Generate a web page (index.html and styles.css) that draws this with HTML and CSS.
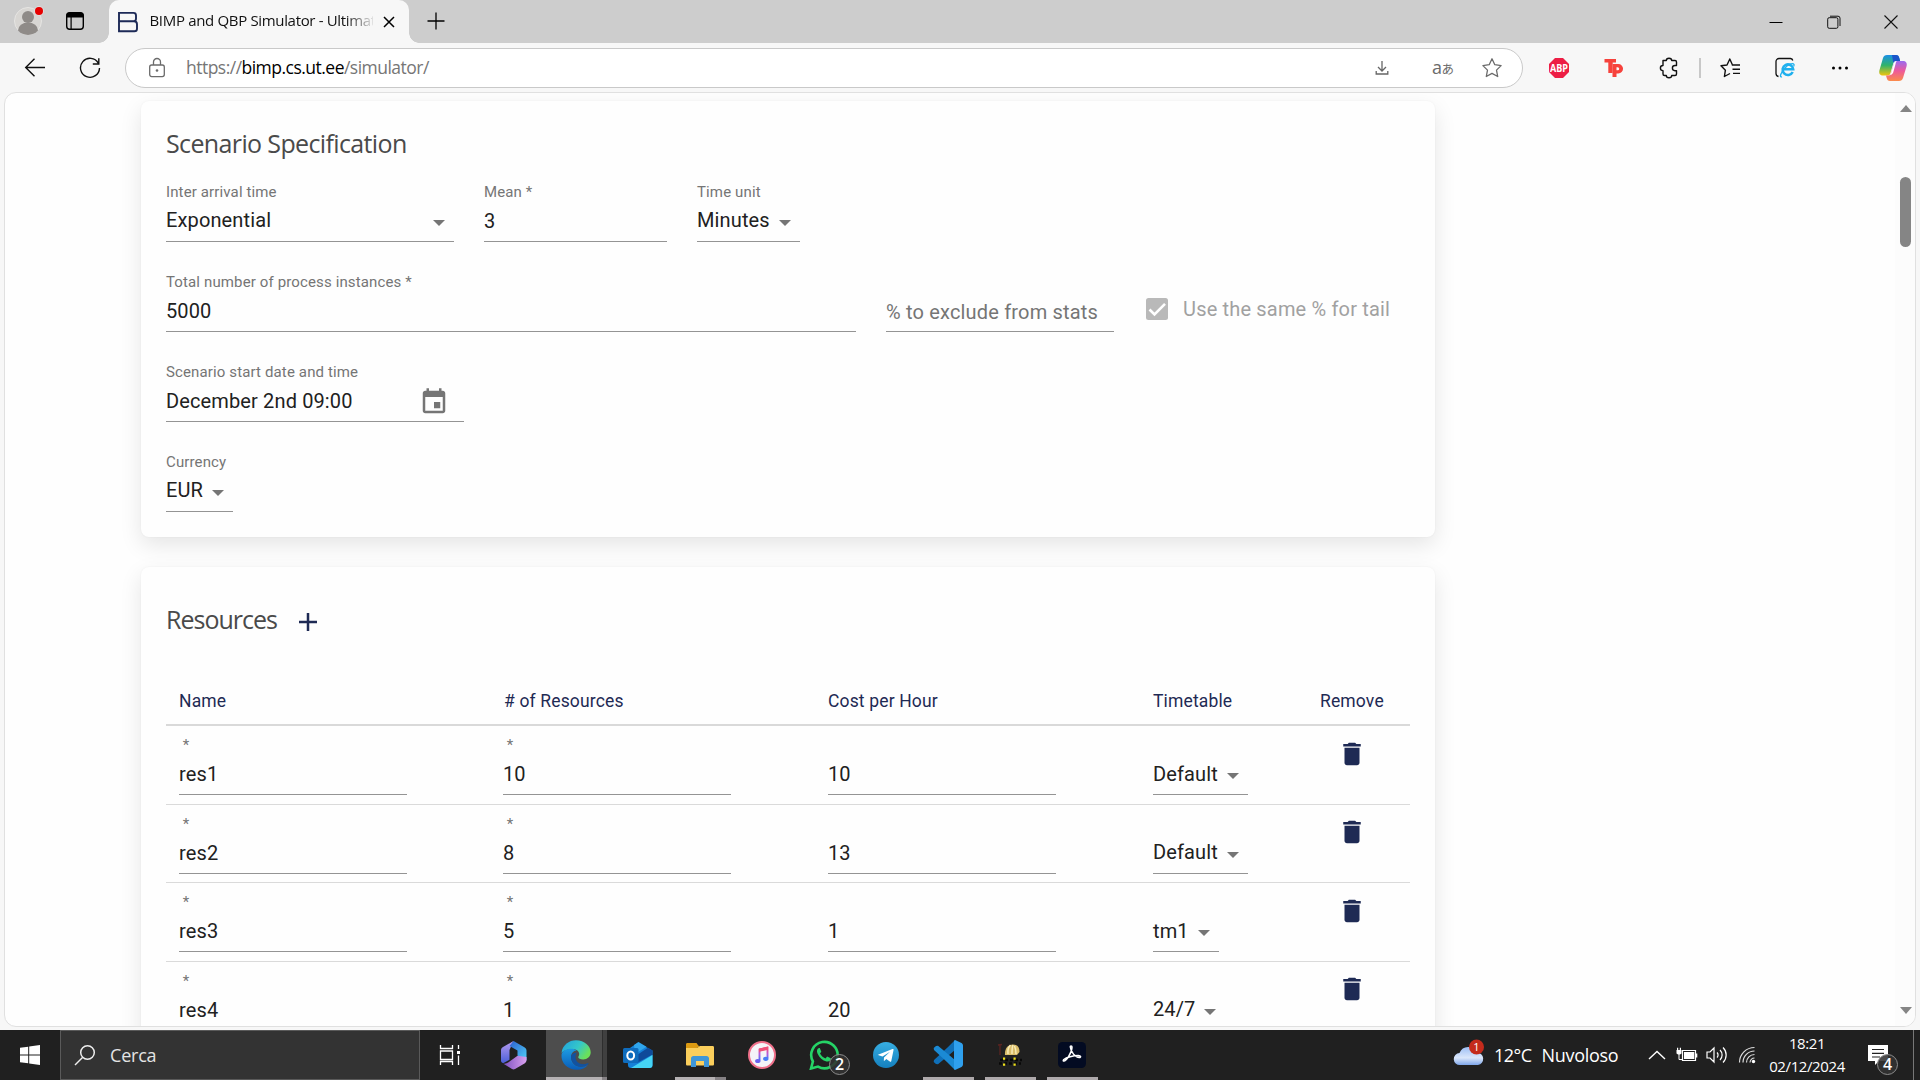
FILE: index.html
```html
<!DOCTYPE html>
<html lang="en">
<head>
<meta charset="utf-8">
<title>BIMP and QBP Simulator - Ultimate</title>
<link rel="stylesheet" href="styles.css">
</head>
<body>
<svg class="defs" width="0" height="0">
  <defs>
    <symbol id="trash" viewBox="0 0 24 24"><path d="M6 19c0 1.1.9 2 2 2h8c1.1 0 2-.9 2-2V7H6v12zM19 4h-3.5l-1-1h-5l-1 1H5v2h14V4z"/></symbol>
    <linearGradient id="cpA" x1="0" y1="0" x2="0" y2="1"><stop offset="0" stop-color="#1a8fe8"/><stop offset=".5" stop-color="#2fb36b"/><stop offset="1" stop-color="#f2c40c"/></linearGradient>
    <linearGradient id="cpB" x1="0" y1="0" x2="0" y2="1"><stop offset="0" stop-color="#9a6bf0"/><stop offset=".5" stop-color="#ee5a9a"/><stop offset="1" stop-color="#fb8b4a"/></linearGradient>
    <linearGradient id="edA" x1="0" y1="0" x2="1" y2=".5"><stop offset="0" stop-color="#1f9fe0"/><stop offset=".6" stop-color="#35c8c8"/><stop offset="1" stop-color="#6be05a"/></linearGradient>
    <linearGradient id="edB" x1="0" y1="0" x2="0" y2="1"><stop offset="0" stop-color="#1d9be2"/><stop offset="1" stop-color="#0a5cb8"/></linearGradient>
    <linearGradient id="itA" x1="0" y1="0" x2="0" y2="1"><stop offset="0" stop-color="#fb4a6a"/><stop offset=".5" stop-color="#b35be0"/><stop offset="1" stop-color="#3a7ef5"/></linearGradient>
    <linearGradient id="cl" x1="0" y1="0" x2="0" y2="1"><stop offset="0" stop-color="#9dbff5"/><stop offset=".6" stop-color="#dbe7fb"/><stop offset="1" stop-color="#7ea6ea"/></linearGradient>
    <linearGradient id="mA" x1="0" y1="0" x2="0" y2="1"><stop offset="0" stop-color="#b89cf0"/><stop offset="1" stop-color="#4a5fd8"/></linearGradient>
    <linearGradient id="mB" x1="0" y1="0" x2="1" y2="1"><stop offset="0" stop-color="#2d5fd0"/><stop offset="1" stop-color="#4fd0f5"/></linearGradient>
    <linearGradient id="mC" x1="0" y1="0" x2="1" y2="0"><stop offset="0" stop-color="#7b4fc0"/><stop offset="1" stop-color="#d9a0ee"/></linearGradient>
    <linearGradient id="tg" x1="0" y1="0" x2="0" y2="1"><stop offset="0" stop-color="#37aee2"/><stop offset="1" stop-color="#1580be"/></linearGradient>
  </defs>
</svg>

<header class="tabstrip">
  <svg class="profile" width="32" height="32" viewBox="0 0 32 32"><circle cx="16" cy="17" r="13.5" fill="#d8d6d3" stroke="#e6e5e3"/><circle cx="16" cy="13" r="6" fill="#8f8b88"/><path d="M6 26.500a10 8 0 0 1 20 0a13.500 13.500 0 0 1-20 0z" fill="#8f8b88"/><circle cx="27" cy="7" r="5" fill="#dcdcdc"/><circle cx="27" cy="7" r="4" fill="#e60000"/></svg>
  <svg class="workspaces" width="20" height="20" viewBox="0 0 20 20"><rect x="1.700" y="1.700" width="16.600" height="16.600" rx="3" fill="none" stroke="#000" stroke-width="1.400"/><path d="M1.500 6.500V4.500a3 3 0 0 1 3-3h11a3 3 0 0 1 3 3v2zM5.500 6h1.200v12H5.500z"/></svg>
  <div class="tab">
    <svg width="22" height="22" viewBox="0 0 22 22"><path d="M2 1.900h14.500a2.500 2.500 0 0 1 2.500 2.500v3.300a2.600 2.600 0 0 1-2.600 2.600H2zM2 10.300h15a3 3 0 0 1 3 3v4.400a2.600 2.600 0 0 1-2.600 2.600H2z" fill="none" stroke="#1d2a57" stroke-width="1.900"/></svg>
    <span class="tab-title">BIMP and QBP Simulator - Ultimate</span>
    <svg class="tab-close" width="12" height="12" viewBox="0 0 12 12"><path d="M1 1l10 10M11 1L1 11" stroke="#000" stroke-width="1.500"/></svg>
  </div>
  <svg class="newtab" width="20" height="20" viewBox="0 0 20 20"><path d="M10 1.500v17M1.500 10h17" stroke="#000" stroke-width="1.300"/></svg>
  <div class="winctl">
    <span><svg width="14" height="14" viewBox="0 0 14 14"><path d="M.500 7.500h13" stroke="#000"/></svg></span>
    <span><svg width="14" height="14" viewBox="0 0 14 14"><rect x=".700" y="2.700" width="10.200" height="10.600" rx="1.500" fill="none" stroke="#111"/><path d="M3 1.200h8a2 2 0 0 1 2 2V11" fill="none" stroke="#111"/></svg></span>
    <span><svg width="14" height="14" viewBox="0 0 14 14"><path d="M.500.500l13 13M13.500.500l-13 13" stroke="#111" stroke-width="1.100"/></svg></span>
  </div>
</header>

<nav class="toolbar">
  <svg class="back" width="22" height="22" viewBox="0 0 22 22"><path d="M21 10.500H2M10.500 1.700L1.700 10.500l8.800 8.800" fill="none" stroke="#111" stroke-width="1.400"/></svg>
  <svg class="reload" width="22" height="22" viewBox="0 0 22 22"><path d="M19.300 6.200A9.500 9.500 0 1 0 20.500 11M19.800 1.200v5.800h-6" fill="none" stroke="#111" stroke-width="1.400"/></svg>
  <div class="address">
    <svg class="lock" width="20" height="22" viewBox="0 0 20 22"><rect x="2.700" y="8" width="14.600" height="11.600" rx="2" fill="none" stroke="#6b6b6b" stroke-width="1.300"/><path d="M6.500 8V5a3.500 3.500 0 0 1 7 0v3" fill="none" stroke="#6b6b6b" stroke-width="1.300"/><circle cx="10" cy="13.500" r="1.300" fill="#6b6b6b"/></svg>
    <span class="url">https://<b>bimp.cs.ut.ee</b>/simulator/</span>
    <svg class="dl" width="20" height="20" viewBox="0 0 20 20"><path d="M10 3v9.500M6 9l4 4 4-4M4.200 13v3h11.600v-3" fill="none" stroke="#666" stroke-width="1.300"/></svg>
    <span class="translate"><i>a</i><i class="jp">あ</i></span>
    <svg class="star" width="22" height="22" viewBox="0 0 22 22"><path d="M11 1.800l2.800 5.900 6.300.9-4.600 4.500 1.200 6.400L11 16.400l-5.700 3.100 1.200-6.400L1.900 8.600l6.300-.9z" fill="none" stroke="#6b6b6b" stroke-width="1.300" stroke-linejoin="round"/></svg>
  </div>
  <svg class="abp" width="22" height="22" viewBox="0 0 22 22"><path d="M7 1h8l6 6v8l-6 6H7l-6-6V7z" fill="#ed1e45"/><text x="11" y="15" text-anchor="middle" class="abp-t" textLength="18" lengthAdjust="spacingAndGlyphs">ABP</text></svg>
  <svg class="g33" width="22" height="22" viewBox="0 0 22 22"><path d="M1.500 2h11.500v3.500H9.700V16H5.300V5.500H1.500zM9.500 7h5.800a4.600 4.600 0 0 1 0 9.500H13.500V20h-4zM13.500 10.300v3h1.200a1.500 1.500 0 0 0 0-3z" fill="#f6423c" fill-rule="evenodd"/></svg>
  <svg class="g33" width="22" height="22" viewBox="0 0 22 22"><path d="M5 3.500h3.300a2.700 2.300 0 0 1 5.400 0H17a1.500 1.500 0 0 1 1.500 1.500V8.500H17a2.500 2.500 0 0 0 0 5.200h1.500V17a1.500 1.500 0 0 1-1.500 1.500h-3.300a2.700 2.300 0 0 1-5.400 0H6.500A1.500 1.500 0 0 1 5 17v-3.300a2.600 2.600 0 0 1 0-5.200z" fill="none" stroke="#111" stroke-width="1.400" stroke-linejoin="round"/></svg>
  <span class="sep"></span>
  <svg class="fav" width="22" height="22" viewBox="0 0 22 22"><path d="M13.500 8l-2.700-6-2.800 6-6 .8 4.400 4.400-1 6.300 5.600-3M12.800 8h8.200M13.500 12.200H21M14 16.400h7" fill="none" stroke="#111" stroke-width="1.400" stroke-linejoin="round"/></svg>
  <svg class="g33" width="22" height="22" viewBox="0 0 22 22"><path d="M4.500 19.500A3 3 0 0 1 2 16.500v-12A3 3 0 0 1 5 1.500h11.500a2.500 2.500 0 0 1 2.300 2" fill="none" stroke="#111" stroke-width="1.300"/><path d="M18.700 15a5.300 5.300 0 1 1 .5-2.700H9.500" fill="none" stroke="#1fb0ee" stroke-width="2.600"/><path d="M8 19.800c-2 .6-2.300-1.500.5-5.500s7.500-8.500 11-7.500c1 .5.700 1.500.3 2.500" fill="none" stroke="#1fb0ee" stroke-width="1.300"/></svg>
  <svg class="g33" width="22" height="22" viewBox="0 0 22 22"><circle cx="4.500" cy="11" r="1.500"/><circle cx="11" cy="11" r="1.500"/><circle cx="17.500" cy="11" r="1.500"/></svg>
  <svg class="copilot" width="30" height="30" viewBox="0 0 30 30"><path d="M9 2h9c2 0 2.800 1.200 3.300 3l.8 3h-4c-2 0-2.500 1-3 3l-2.600 9c-.5 1.700-1.500 2.500-3 2.500H5C1.500 22.500.700 20 1.500 17L5 5c.6-2 2-3 4-3z" fill="url(#cpA)"/><path d="M14 2h4c2 0 2.800 1.200 3.300 3l.8 3h-4c-2 0-2.500 1-2.800 2z" fill="#1b55c9"/><path d="M21 28h-9c-2 0-2.800-1.200-3.300-3L8 22.500h2c2 0 2.800-1 3.300-3l2.500-9c.5-1.700 1.500-2.500 3-2.500H25c3.500 0 4.300 2.500 3.500 5.500L25 25c-.6 2-2 3-4 3z" fill="url(#cpB)"/><path d="M18.800 8c-1.500 0-2.500.8-3 2.500l-2.500 9c-.5 2-1.300 3-3.300 3 2.500-.2 4.500-.8 5.200-3l2.200-8c.3-1.500.6-2.600 1.400-3.500z" fill="#fff"/></svg>
</nav>

<div class="viewport">
  <main class="content">
    <section class="card spec">
      <h2>Scenario Specification</h2>
      <div class="row">
        <div class="field w288"><label>Inter arrival time</label><div class="val select">Exponential<i class="arrow"></i></div></div>
        <div class="field w183"><label>Mean *</label><div class="val">3</div></div>
        <div class="field w103"><label>Time unit</label><div class="val select">Minutes<i class="arrow"></i></div></div>
      </div>
      <div class="row">
        <div class="field w690"><label>Total number of process instances *</label><div class="val">5000</div></div>
        <div class="field w228"><label></label><div class="val hint">% to exclude from stats</div></div>
        <div class="check"><svg width="22" height="22" viewBox="0 0 22 22"><rect width="22" height="22" rx="2.500" fill="#b9b9b9"/><path d="M3.500 11.500l5 5L19 5.800" fill="none" stroke="#fff" stroke-width="2.600"/></svg><span>Use the same % for tail</span></div>
      </div>
      <div class="row">
        <div class="field w298"><label>Scenario start date and time</label><div class="val date">December 2nd 09:00<svg width="30" height="30" viewBox="0 0 24 24"><path d="M17 12h-5v5h5v-5zM16 1v2H8V1H6v2H5c-1.110 0-1.990.9-1.990 2L3 19c0 1.100.890 2 2 2h14c1.100 0 2-.9 2-2V5c0-1.100-.9-2-2-2h-1V1h-2zm3 18H5V8h14v11z" fill="#757575"/></svg></div></div>
      </div>
      <div class="row">
        <div class="field w67"><label>Currency</label><div class="val select">EUR<i class="arrow"></i></div></div>
      </div>
    </section>

    <section class="card res">
      <h2>Resources<svg width="18" height="18" viewBox="0 0 18 18"><path d="M9 0v18M0 9h18" stroke="#1e2a54" stroke-width="2.500"/></svg></h2>
      <div class="thead"><span>Name</span><span># of Resources</span><span>Cost per Hour</span><span>Timetable</span><span class="rm">Remove</span></div>
      <div class="trow">
        <div class="field"><label>&nbsp;*</label><div class="val">res1</div></div>
        <div class="field"><label>&nbsp;*</label><div class="val">10</div></div>
        <div class="field"><label></label><div class="val">10</div></div>
        <div class="field w95"><label></label><div class="val select">Default<i class="arrow"></i></div></div>
        <svg class="trash"><use href="#trash"/></svg>
      </div>
      <div class="trow">
        <div class="field"><label>&nbsp;*</label><div class="val">res2</div></div>
        <div class="field"><label>&nbsp;*</label><div class="val">8</div></div>
        <div class="field"><label></label><div class="val">13</div></div>
        <div class="field w95"><label></label><div class="val select">Default<i class="arrow"></i></div></div>
        <svg class="trash"><use href="#trash"/></svg>
      </div>
      <div class="trow">
        <div class="field"><label>&nbsp;*</label><div class="val">res3</div></div>
        <div class="field"><label>&nbsp;*</label><div class="val">5</div></div>
        <div class="field"><label></label><div class="val">1</div></div>
        <div class="field w66"><label></label><div class="val select">tm1<i class="arrow"></i></div></div>
        <svg class="trash"><use href="#trash"/></svg>
      </div>
      <div class="trow">
        <div class="field"><label>&nbsp;*</label><div class="val">res4</div></div>
        <div class="field"><label>&nbsp;*</label><div class="val">1</div></div>
        <div class="field"><label></label><div class="val">20</div></div>
        <div class="field w72"><label></label><div class="val select">24/7<i class="arrow"></i></div></div>
        <svg class="trash"><use href="#trash"/></svg>
      </div>
    </section>
  </main>
  <div class="scrollbar"><i class="up"></i><i class="thumb"></i><i class="down"></i></div>
</div>

<footer class="taskbar">
  <div class="start"><svg width="20" height="20" viewBox="0 0 20 20"><path d="M0 2.800L8.200 1.700v7.800H0zM9.200 1.500L20 0v9.500H9.200zM0 10.500h8.200v7.800L0 17.200zM9.200 10.500H20V20L9.200 18.500z" fill="#fff"/></svg></div>
  <div class="search"><svg width="22" height="22" viewBox="0 0 22 22"><circle cx="13.500" cy="8.500" r="6.800" fill="none" stroke="#eee" stroke-width="1.500"/><path d="M8.500 13.500L1 21" stroke="#eee" stroke-width="1.500"/></svg><span>Cerca</span></div>
  <div class="taskview"><svg width="22" height="20" viewBox="0 0 22 20"><path d="M1.500 0v3.500h12V0M1.500 20v-3.500h12V20M1.500 6h12v8.500h-12zM19.500 0v4M19.500 10.500V20" fill="none" stroke="#fff" stroke-width="1.300"/><path d="M18 6h3v3h-3z" fill="#fff"/></svg></div>

  <div class="app"><svg width="28" height="30" viewBox="0 0 28 30"><path d="M13.500 1L3 7C1.500 8 1 9 1 10.500v10c0 2 1.500 3 3 2.300l5.500-3V10z" fill="url(#mA)"/><path d="M13.500 1l10.500 6c1.500.8 2.500 2 2.500 3.500v10l-9-5v-5l-8-4.500z" fill="url(#mB)"/><path d="M26.500 17v3c0 1.500-.7 2.700-2 3.500L15 29c-1 .6-2 .6-3 0l-9-5.500c2 .6 4-.2 5.500-1.200l9-6.500z" fill="url(#mC)"/></svg></div>
  <div class="app active"><svg width="30" height="30" viewBox="0 0 30 30"><path d="M.500 13C1.500 5 8 .300 15 .300c8.500 0 14.700 6 14.700 12 0 4.500-3.500 7.200-7.500 7.200-3 0-5-1-5-2.200 0-.8 1-1.300 1-3.300 0-2.500-2.500-5-6.500-5C6.500 9 2 11 .500 13z" fill="url(#edA)"/><path d="M.500 15C1 11 5 8.800 10.500 8.800c2 0 4 .7 5 1.600-3 .2-5.500 3-5.500 6.600 0 5.500 4.500 9.800 10 9.800 3 0 5.500-1 7-2-2.500 3.300-6.500 5-11 5C6 29.700 0 22.500.500 15z" fill="url(#edB)"/><path d="M10 17c0 5.500 4.500 9.800 10 9.800 3.500 0 6-1.500 7.300-2.600.5-.6 0-1.200-.8-.9-6 2.500-12-.5-12-6.300 0-2 .5-3.500 1.500-4.600-3 .2-6 1.600-6 4.600z" fill="#1252a0"/></svg></div>
  <div class="app"><svg width="30" height="28" viewBox="0 0 30 28"><path d="M4 9L15 1.500 29.500 9.500V24a3 3 0 0 1-3 3H8a3 3 0 0 1-3-3z" fill="#1581d8"/><path d="M11 4l4.500-3 8 4.700L12 13z" fill="#2fa5ec"/><path d="M29.500 9.500v4L14 22V14L25 6.800z" fill="#0f4a9a"/><path d="M29.500 14v10a3 3 0 0 1-3 3H8z" fill="#45d4f5"/><rect y="7" width="15.500" height="15" rx="1.500" fill="#0f6cbd"/><ellipse cx="7.700" cy="14.500" rx="3.400" ry="4" fill="none" stroke="#fff" stroke-width="2"/></svg></div>
  <div class="app open split"><svg width="28" height="24" viewBox="0 0 28 24"><path d="M0 1.500C0 .500.500 0 1.500 0h9L13 3.500H0z" fill="#dc9a12"/><path d="M0 1.500V5h11l3-2z" fill="#dc9a12"/><path d="M0 5h11l3-2h12.500c1 0 1.500.5 1.500 1.500V21c0 1-.5 1.500-1.500 1.500h-25C.500 22.500 0 22 0 21z" fill="#fbcf5c"/><path d="M5 24v-8.500c0-1.500 1-2.500 2.500-2.500h13c1.500 0 2.500 1 2.500 2.500V24h-5v-6h-8v6z" fill="#3f97d8"/></svg></div>
  <div class="app"><svg width="28" height="28" viewBox="0 0 28 28"><circle cx="14" cy="14" r="13" fill="#f4f4f8" stroke="#f0708a" stroke-width="2"/><path d="M11.500 19.500V8.500l8-1.800V17" fill="none" stroke="url(#itA)" stroke-width="1.900"/><path d="M11 7.500l9-2v3.300l-9 2z" fill="#f0507a"/><ellipse cx="9.800" cy="20" rx="2.700" ry="2.100" fill="#6a62f0"/><ellipse cx="17.800" cy="17.800" rx="2.700" ry="2.100" fill="#4a7cf5"/></svg></div>
  <div class="app"><svg width="30" height="30" viewBox="0 0 30 30"><path d="M2 28.500l1.900-7A13.200 13.200 0 1 1 9 26.600z" fill="none" stroke="#25d366" stroke-width="2.600"/><path d="M10 8c-2 .8-2.600 3-1.500 5.500 2 4.500 5 7 9 8 2.500.5 4.500-.8 4.300-3.200l-3.700-1.800-1.600 2c-2.500-1-4.300-2.700-5.500-5l1.300-1.800L10.800 8z" fill="#25d366"/></svg><b class="badge wa">2</b></div>
  <div class="app"><svg width="26" height="26" viewBox="0 0 26 26"><circle cx="13" cy="13" r="13" fill="url(#tg)"/><path d="M5 12.800L19.500 7c.8-.2 1.300.2 1 1.200L18.300 19c-.2.900-.7 1-1.500.6l-3.500-2.600-1.800 1.700c-.3.300-.7.200-.7-.3l.2-3 6-5.600-7.500 4.700-3.800-1.200c-.8-.2-.9-.8-.7-.8z" fill="#fff"/></svg></div>
  <div class="app open"><svg width="30" height="30" viewBox="0 0 30 30"><path d="M22 0l-7.500 7.500L1 20l-.3 2L3 24l2 .2L22 10z" fill="#0f6fb8"/><path d="M22 30l-7.500-7.500L1 10l-.3-2L3 6l2-.2L22 20z" fill="#1b8ad4"/><path d="M22 0l6 2.800c1.300.6 2 1.700 2 3v18.400c0 1.300-.7 2.400-2 3L22 30l-1-1V1z" fill="#2fa0ee"/></svg></div>
  <div class="app open"><svg width="26" height="26" viewBox="0 0 26 26"><path d="M8 13c-.5-6 2.500-10.500 8-10.500 4.500 0 6.500 3 6.500 7.500L20 13z" fill="#d9bd6a"/><path d="M11 12c-.5-4 .5-7 2.500-9M15 12c0-3 0-7 1-9M19 12c0-3-.5-6-1.500-8" stroke="#f8ecb8" fill="none" stroke-width="1.500"/><path d="M1 3l4-.5M3 3v10" stroke="#5a2420" stroke-width="1.300"/><path d="M3 18h22M2 21.500h22" stroke="#080808" stroke-width="2.600" stroke-dasharray="3 2"/><path d="M6 15.500h2.200v2.200H6zM16.500 15.500h2.200v2.200h-2.200zM6 21.500h2.200v2.200H6zM16.500 21.500h2.200v2.200h-2.200z" fill="#f0e21a"/></svg></div>
  <div class="app open"><svg width="28" height="28" viewBox="0 0 28 28"><rect width="28" height="26" y="1" rx="4.500" fill="#030b22"/><path d="M6 20c2 0 8-8 8-14 0-1.500-2-1.500-1.700 0 .5 5 5 10.500 9 10.500 2 0 1.700-2-1-2-5 0-12 2-14.500 4-1 1-.5 1.600.2 1.500z" fill="none" stroke="#fff" stroke-width="1.500"/></svg></div>

  <div class="weather"><svg width="32" height="28" viewBox="0 0 32 28"><path d="M7 26a6 6 0 0 1-.5-12A9.500 9.500 0 0 1 24 13.500 6.300 6.300 0 0 1 25 26z" fill="url(#cl)"/><circle cx="23.500" cy="8" r="7.500" fill="#c42b1c"/><text x="23.500" y="12" text-anchor="middle" class="w-t">1</text></svg><span class="temp">12°C</span><span class="sky">Nuvoloso</span></div>
  <svg class="chev" width="18" height="10" viewBox="0 0 18 10"><path d="M1 9l8-7.500L17 9" fill="none" stroke="#fff" stroke-width="1.400"/></svg>
  <svg class="bat" width="22" height="16" viewBox="0 0 22 16"><path d="M6.500 3.500h13v10h-13zM20.700 6.500v4" fill="none" stroke="#fff" stroke-width="1.200"/><path d="M8 5h10.300v7H8zM.500 3h5v3.500l-1.500 1h-2l-1.500-1zM1 .800h1.200V3H1zM3.800.800H5V3H3.800z" fill="#fff"/><path d="M3 7v5.500h4" fill="none" stroke="#fff"/></svg>
  <svg class="snd" width="22" height="18" viewBox="0 0 22 18"><path d="M1 6h3l4-4v14l-4-4H1zM11 6.500a3.500 3.500 0 0 1 0 5M14 4a7 7 0 0 1 0 10M17 1.500a10.500 10.500 0 0 1 0 15" fill="none" stroke="#fff" stroke-width="1.200"/></svg>
  <svg class="wifi" width="18" height="18" viewBox="0 0 18 18"><path d="M1.500 16.500A15 15 0 0 1 16.500 1.500M5 16.500A11.500 11.500 0 0 1 16.500 5M8.500 16.500a8 8 0 0 1 8-8M12 16.500a4.500 4.500 0 0 1 4.500-4.500" fill="none" stroke="#ddd" stroke-width="1.200"/><circle cx="15.500" cy="15.500" r="1.700" fill="#fff"/></svg>
  <div class="clock"><span class="time">18:21</span><span class="day">02/12/2024</span></div>
  <div class="notif"><svg width="20" height="20" viewBox="0 0 20 20"><path d="M0 0h20v16h-9l-4 4v-4H0z" fill="#fff"/><path d="M4 4.500h12M4 8.300h12M4 12h8" stroke="#222" stroke-width="1.200"/></svg><b class="badge nt">4</b></div>
  <i class="peek"></i>
</footer>
</body>
</html>
```
FILE: styles.css
```css
* { box-sizing: border-box; }
body { margin: 0; width: 1920px; height: 1080px; overflow: hidden; background: #f7f7f7; display: flex; flex-direction: column; font-family: Roboto, sans-serif; color: #212121; }
svg { display: block; flex: none; }
.defs { position: absolute; }
i { font-style: normal; }

/* tab strip */
.tabstrip { height: 43px; background: #cdcdcd; display: flex; align-items: center; flex: none; font-family: "Open Sans", sans-serif; }
.profile { margin: 0 0 3px 12px; }
.workspaces { margin-left: 21px; margin-bottom: 1px; }
.tab { position: relative; width: 300px; height: 43px; margin-left: 24px; padding: 0 14px 0 8px; background: #f7f7f7; border-radius: 10px 10px 0 0; display: flex; align-items: center; }
.tab::before, .tab::after { content: ""; position: absolute; bottom: 0; width: 10px; height: 10px; }
.tab::before { left: -10px; background: radial-gradient(circle at 0 0, transparent 9.5px, #f7f7f7 10px); }
.tab::after { right: -10px; background: radial-gradient(circle at 100% 0, transparent 9.5px, #f7f7f7 10px); }
.tab-title { width: 223px; margin-left: 10.500px; overflow: hidden; white-space: nowrap; font-size: 15px; line-height: 24px; letter-spacing: -.33px; color: #111; margin-bottom: 3px; -webkit-mask-image: linear-gradient(90deg, #000 195px, transparent 226px); mask-image: linear-gradient(90deg, #000 195px, transparent 226px); }
.tab-close { margin-left: 10.500px; }
.newtab { margin: 0 0 2px 16.500px; }
.winctl { margin-left: auto; display: flex; }
.winctl span { width: 57.5px; display: flex; justify-content: center; }

/* toolbar */
.toolbar { height: 49px; display: flex; align-items: center; flex: none; }
.back { margin-left: 24px; }
.reload { margin-left: 33px; }
.address { width: 1398px; height: 40px; margin-left: 24px; padding: 0 19px 0 21px; border: 1px solid #c9c9c9; border-radius: 20px; background: #fff; display: flex; align-items: center; }
.url { margin-left: 19px; margin-bottom: 1px; font: 17.5px/26px "Open Sans", sans-serif; letter-spacing: -.52px; color: #767676; }
.url b { font-weight: 400; color: #000; }
.dl { margin-left: auto; }
.translate { width: 22px; margin-left: 40px; display: flex; align-items: baseline; font: 18px/24px "Open Sans", sans-serif; color: #6b6b6b; }
.translate .jp { font: 12.500px/24px "Noto Sans CJK JP", sans-serif; margin-left: -.5px; }
.star { margin-left: 27px; }
.abp { margin-left: 25px; }
.abp-t { font: 700 11px "Open Sans", sans-serif; fill: #fff; }
.g33 { margin-left: 33px; }
.sep { width: 2px; height: 20px; margin-left: 19px; background: #c8c8c8; }
.fav { margin-left: 18px; }
.copilot { margin-left: 27px; }

/* page */
.viewport { width: 1912px; height: 935px; margin-left: 4px; flex: none; overflow: hidden; border: 1px solid #e0e0e0; border-radius: 12px; background: #fefefe; display: flex; justify-content: space-between; }
.content { padding: 8px 0 0 136px; }
.card { width: 1294px; border-radius: 8px; background: #fefefe; box-shadow: 0 8px 22px rgba(0,0,0,.1), 0 0 2px rgba(0,0,0,.05); }
.spec { height: 436px; padding: 25px 25px 0; }
.res { height: 600px; margin-top: 30px; padding: 35px 25px 0; }
h2 { margin: 0; height: 34px; font: 25px/34px "Open Sans", sans-serif; letter-spacing: -.63px; color: #4a4a4a; display: flex; align-items: center; white-space: nowrap; }
.res h2 { letter-spacing: -1px; }
.res h2 svg { margin: 6px 0 0 22.500px; }
.row { display: flex; gap: 30px; margin-bottom: 31px; }
.spec h2 { margin-bottom: 23px; }
.field { height: 59px; display: flex; flex-direction: column; }
.field label { height: 18px; font-size: 15px; line-height: 18px; letter-spacing: .13px; color: #757575; white-space: nowrap; }
.val { height: 41px; border-bottom: 1px solid #949494; display: flex; align-items: center; justify-content: space-between; font-size: 20px; line-height: 30px; letter-spacing: .13px; white-space: nowrap; }
.select { padding: 0 9px 2px 0; }
.hint { color: #757575; padding-top: 2px; letter-spacing: .18px; }
.date { padding-right: 15px; }
.date svg { margin-top: 2px; }
.arrow { margin-top: 5px; border: 6.500px solid transparent; border-top-color: #757575; border-bottom: 0; }
.w288 { width: 288px; } .w183 { width: 183px; } .w103 { width: 103px; } .w690 { width: 690px; }
.w228 { width: 228px; } .w298 { width: 298px; } .w67 { width: 67px; }
.check { height: 22px; margin: 25px 0 0 2px; display: flex; align-items: center; gap: 15px; font-size: 20px; letter-spacing: .17px; color: #a1a1a1; }

.thead, .trow { display: grid; grid-template-columns: 324px 325px 325px 168px 102px; width: 1244px; }
.thead { height: 49px; margin-top: 41px; border-bottom: 2px solid #d9d9d9; align-items: center; font-size: 17.500px; letter-spacing: .15px; color: #1e2a54; }
.thead span { padding-left: 13px; }
.thead span:nth-child(2) { padding-left: 14px; }
.thead .rm { padding-left: 12px; }
.trow { height: 78.500px; border-bottom: 1px solid #dadada; padding-top: 10px; }
.trow .field { width: 228px; margin-left: 13px; }
.trow .w95 { width: 95px; } .trow .w66 { width: 66px; } .trow .w72 { width: 72px; }
.trow .select { padding-bottom: 1px; }
.trash { width: 30px; height: 30px; margin: 2.700px 0 0 29px; fill: #1e2a54; }

.scrollbar { width: 20px; background: #fcfcfc; display: flex; flex-direction: column; align-items: center; padding: 12px 0 12px 1px; }
.up, .down { border: 6.500px solid transparent; }
.up { border-bottom: 7px solid #858585; border-top: 0; }
.down { border-top: 7px solid #858585; border-bottom: 0; margin-top: auto; }
.thumb { width: 11px; height: 70px; margin-top: 65px; border-radius: 6px; background: #858585; }

/* taskbar */
.taskbar { height: 50px; margin-top: 3px; background: #202020; display: flex; align-items: center; flex: none; font-family: "Open Sans", sans-serif; color: #fff; }
.start { width: 60px; display: flex; justify-content: center; }
.search { width: 360px; height: 50px; background: #333; border: 1px solid #5a5a5a; padding-left: 13px; display: flex; align-items: center; gap: 14px; font-size: 18px; letter-spacing: -.2px; color: #e4e4e4; }
.taskview { width: 63px; padding-left: 19px; }
.app { position: relative; width: 62px; height: 50px; display: flex; align-items: center; justify-content: center; flex: none; }
.active { background: linear-gradient(90deg, transparent 1px, #4d4d4d 1px, #4d4d4d 57px, #2e2e2e 57px, #2e2e2e 58px, #404040 58px); }
.open::after, .active::after { content: ""; position: absolute; bottom: 0; left: 6px; width: 51px; height: 3px; background: #aea9ab; }
.active::after { left: 1px; width: 61px; background: linear-gradient(90deg, #b5b1b3 56px, #858184 56px); }
.split::after { background: linear-gradient(90deg, #b5b1b3 40px, #858184 40px); }
.badge { position: absolute; width: 21px; height: 21px; border: 1px solid #8c8c8c; border-radius: 50%; background: rgba(50,50,50,.88); font: 600 16px/18px "Open Sans", sans-serif; text-align: center; }
.wa { left: 36px; top: 24px; }
.weather { margin-left: 350px; display: flex; align-items: center; font-size: 18px; width: 196px; white-space: nowrap; }
.weather svg { margin-bottom: 4px; }
.w-t { font: 11px "Open Sans", sans-serif; fill: #fff; }
.temp { margin-left: 9px; width: 47.500px; letter-spacing: -.5px; }
.sky { letter-spacing: -.3px; }
.chev { margin-left: -1px; }
.bat { margin-left: 10px; }
.snd { margin-left: 8px; }
.wifi { margin-left: 10px; }
.clock { margin-left: 11px; width: 80px; display: flex; flex-direction: column; align-items: center; font-size: 15px; line-height: 23px; letter-spacing: -.4px; }
.notif { position: relative; margin-left: 21px; }
.nt { left: 9px; top: 9px; }
.peek { width: 1px; height: 50px; margin-left: 25px; background: #777; }
```
